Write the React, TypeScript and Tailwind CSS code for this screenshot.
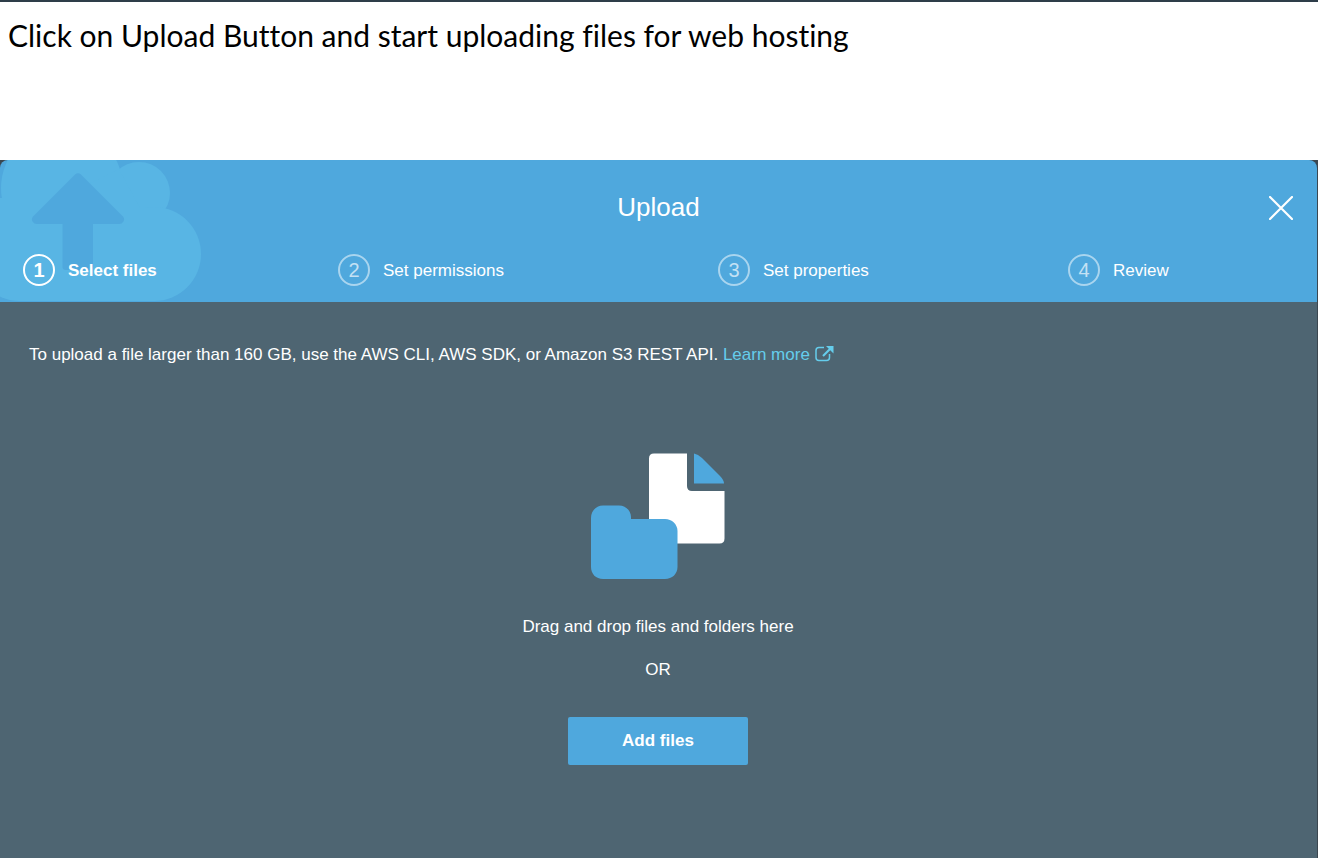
import React from "react";

type Step = { number: number; label: string };

const steps: Step[] = [
  { number: 1, label: "Select files" },
  { number: 2, label: "Set permissions" },
  { number: 3, label: "Set properties" },
  { number: 4, label: "Review" },
];

function CloudArt() {
  return (
    <svg
      className="pointer-events-none absolute left-0 top-0"
      width="202"
      height="142"
      viewBox="0 0 202 142"
      aria-hidden="true"
    >
      <g fill="#58b5e4">
        <circle cx="62" cy="28" r="61" />
        <circle cx="139" cy="33" r="31" />
        <circle cx="154" cy="94" r="47" />
        <circle cx="20" cy="94" r="47" />
        <path d="M0 38H60L119 9L140 48H154V141H20L0 120Z" />
      </g>
      <path
        fill="#4fa8dd"
        d="M75 14.5Q78 12 81 14.5L123 56.500Q125 59 123.500 61.500Q122 64 119 64H93V107Q93 110 90 110H66Q62.500 110 62.500 107V64H37Q34 64 32.500 61.500Q31 59 33 56.500Z"
      />
    </svg>
  );
}

function FilesArt() {
  return (
    <svg width="134" height="126" viewBox="0 0 134 126" aria-hidden="true">
      <path
        fill="#fff"
        d="M63 0.500H96V33Q96 38 101 38H133.500V85.500Q133.500 90.500 128.500 90.500H58V5.500Q58 0.500 63 0.500Z"
      />
      <path fill="#4fa8dd" d="M103 0.500Q107 1 111 5L129 23Q133 27 133 30.500H103Z" />
      <path
        fill="#4fa8dd"
        d="M12 52.500H28C35 52.500 40 58 40 64V66H74C81 66 86.500 71.500 86.500 78V114C86.500 121 81 126 74 126H12C5 126 0 121 0 114V65C0 58 5 52.500 12 52.500Z"
      />
    </svg>
  );
}

function ExternalIcon() {
  return (
    <svg width="19" height="17" viewBox="0 0 19 17" fill="none" aria-hidden="true">
      <path
        d="M9 2.500H4Q1 2.500 1 5.500V12.500Q1 15.500 4 15.500H11.500Q14.500 15.500 14.500 12.500V9"
        stroke="#65cdec"
        strokeWidth="1.500"
      />
      <path d="M8 11L15 4" stroke="#65cdec" strokeWidth="2.200" />
      <path d="M11 1H18.500V8.500Z" fill="#65cdec" />
    </svg>
  );
}

export default function App() {
  return (
    <div className="flex min-h-screen flex-col border-t-2 border-[#2e3d49] bg-white font-['Liberation_Sans',Arial,sans-serif] text-[17px] leading-5 text-white">
      <h1 className="h-[158px] px-2 pt-[15px] font-['Lato',Calibri,sans-serif] text-[30px] leading-9 text-black [font-variant-ligatures:none]">
        Click on Upload Button and start uploading files for web hosting
      </h1>

      <main className="flex grow flex-col bg-[#3b4750] pr-px">
        <header className="relative overflow-hidden rounded-t-lg bg-[#4fa8dd] pb-4 pt-8">
          <CloudArt />
          <h2 className="relative text-center text-[26px] leading-[30px]">Upload</h2>
          <button
            type="button"
            aria-label="Close"
            className="absolute right-6 top-9 cursor-pointer"
          >
            <svg width="24" height="24" viewBox="0 0 24 24" aria-hidden="true">
              <path
                d="M1 1L23 23M23 1L1 23"
                stroke="white"
                strokeWidth="2.200"
                strokeLinecap="round"
              />
            </svg>
          </button>
          <ol className="relative mt-8 grid grid-cols-[315fr_380fr_350fr_249fr] pl-[23px]">
            {steps.map((step) => (
              <li
                key={step.number}
                aria-current={step.number === 1 ? "step" : undefined}
                className="flex items-center gap-[13px] aria-[current=step]:font-bold"
              >
                <span
                  className={
                    step.number === 1
                      ? "flex size-8 items-center justify-center rounded-full border-2 border-white text-xl leading-5"
                      : "flex size-8 items-center justify-center rounded-full border-2 border-[#a9d5ef] text-xl leading-5 text-[#c3e1f4]"
                  }
                >
                  {step.number}
                </span>
                <span className="pt-0.5">{step.label}</span>
              </li>
            ))}
          </ol>
        </header>

        <section className="flex grow flex-col bg-[#4e6572] pb-8 pt-[43px]">
          <p className="px-[29px]">
            To upload a file larger than 160 GB, use the AWS CLI, AWS SDK, or Amazon S3 REST API.{" "}
            <a href="#learn-more" className="inline-flex items-start gap-[5px] text-[#65cdec]">
              Learn more
              <ExternalIcon />
            </a>
          </p>
          <div className="mt-[88px] flex flex-col items-center pr-px">
            <FilesArt />
            <p className="mt-[38px]">Drag and drop files and folders here</p>
            <p className="mt-[23px]">OR</p>
            <button
              type="button"
              className="mt-[37px] h-12 w-[180px] cursor-pointer rounded-xs bg-[#4fa8dd] font-bold"
            >
              Add files
            </button>
          </div>
        </section>
      </main>
    </div>
  );
}
